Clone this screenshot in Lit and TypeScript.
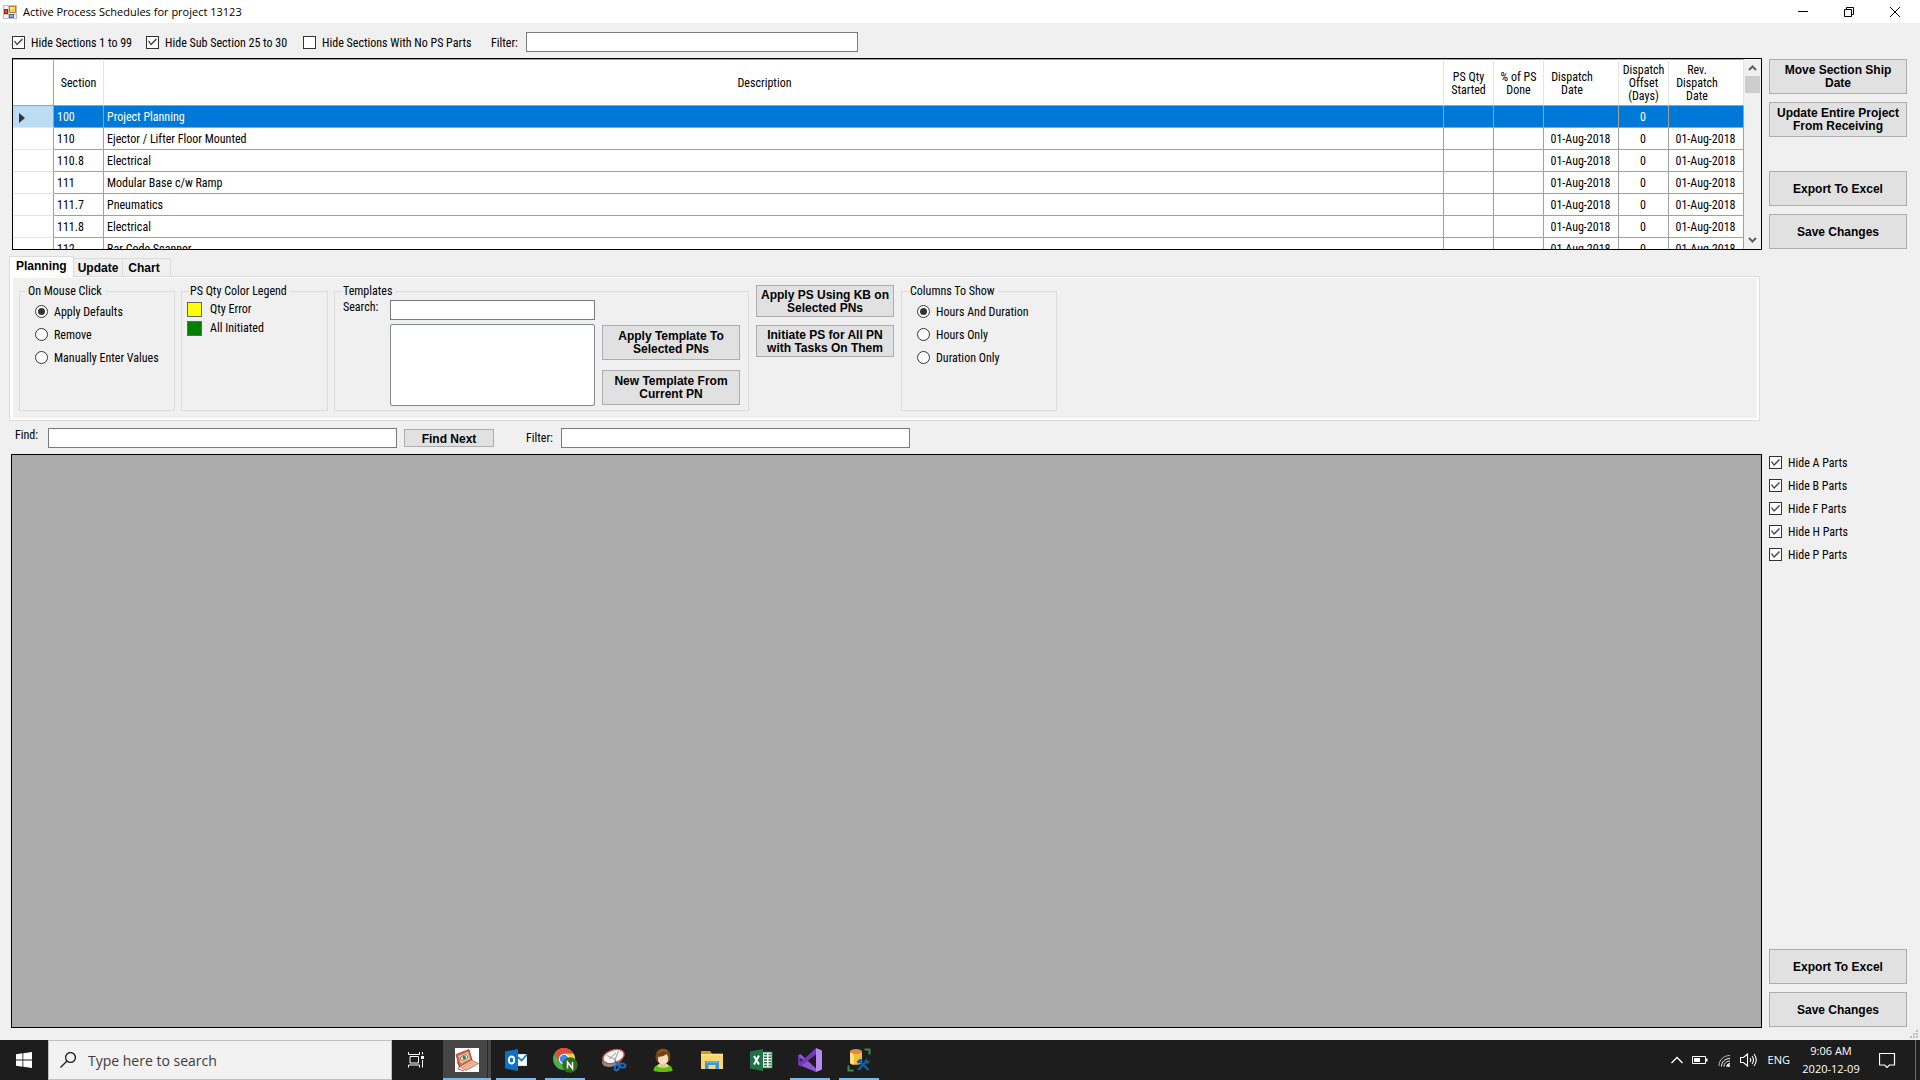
import { LitElement, html, css, svg } from "lit";
import { customElement, state } from "lit/decorators.js";
import { classMap } from "lit/directives/class-map.js";

interface SectionRow {
  section: string;
  description: string;
  dispatch: string;
  offset: number;
  revised: string;
}

const DATE = "01-Aug-2018";

const ROWS: SectionRow[] = [
  { section: "100", description: "Project Planning", dispatch: "", offset: 0, revised: "" },
  { section: "110", description: "Ejector / Lifter Floor Mounted", dispatch: DATE, offset: 0, revised: DATE },
  { section: "110.8", description: "Electrical", dispatch: DATE, offset: 0, revised: DATE },
  { section: "111", description: "Modular Base c/w Ramp", dispatch: DATE, offset: 0, revised: DATE },
  { section: "111.7", description: "Pneumatics", dispatch: DATE, offset: 0, revised: DATE },
  { section: "111.8", description: "Electrical", dispatch: DATE, offset: 0, revised: DATE },
  { section: "112", description: "Bar Code Scanner", dispatch: DATE, offset: 0, revised: DATE },
];

const icon = (size: number, body: unknown) =>
  html`<svg width=${size} height=${size} viewBox="0 0 ${size} ${size}" aria-hidden="true">${body}</svg>`;

const formIcon = icon(14, svg`
  <rect x=".5" y=".5" width="13" height="13" fill="#f4f4f4" stroke="#bdbdbd"/>
  <path d="M5.500 .5v13M.5 9.500h13" stroke="#c4c4c4" fill="none"/>
  <rect x="6.500" y="1.500" width="6" height="6" fill="#fccb4b" stroke="#c08a12"/>
  <path d="M7 2h4v2H7z" fill="#ffe9a0"/>
  <rect x="1.500" y="4.500" width="3" height="4" fill="#e0503a" stroke="#a61d12"/>
  <rect x="6.500" y="9.500" width="4" height="3" fill="#7fb0f5" stroke="#3a6fd0"/>`);

const startIcon = icon(16, svg`<path fill="#fff" d="M0 2.200 6.500 1.300v6.200H0zM7.300 1.200 16 0v7.500H7.300zM0 8.400h6.500v6.300L0 13.800zM7.300 8.400H16V16l-8.700-1.200z"/>`);

const searchIcon = icon(16, svg`<g fill="none" stroke="#1c1c1c" stroke-width="1.300"><circle cx="10.500" cy="5.500" r="4.900"/><path d="M7 9 .5 15.500"/></g>`);

const taskViewIcon = icon(16, svg`<g fill="none" stroke="#fff"><path d="M.5 0v2.500h11V0M.5 15.500v-2.500h11v2.500M2 4.500h8.500v6.500H2zM14.500 0v2.500M14.500 8v7.500"/></g><path fill="#fff" d="M13 4h3v3h-3z"/>`);

const laptopIcon = icon(24, svg`
  <path fill="#fff" d="M0 0h24v24H0z"/>
  <path d="M1 6.500 14 1.500l3 10.500L4.500 19z" fill="#e0664f" stroke="#7b3026" stroke-width=".7"/>
  <path d="M3.500 8 13 4l2 7-9 4.500z" fill="#d9d3ab"/>
  <ellipse cx="9" cy="9.500" rx="4" ry="2.300" transform="rotate(-24 9 9.500)" fill="#f8f4df" stroke="#a03a2f" stroke-width=".7"/>
  <circle cx="9.200" cy="9.400" r="1.700" fill="#277a68"/>
  <path d="M4.500 18.500 16.500 12l7 3.500L11 22.500z" fill="#f4b79a" stroke="#a15a42" stroke-width=".7"/>
  <path d="M8 18.300 16.500 14l3.500 1.700-8.500 4.600z" fill="#e79a7a"/>
  <path d="m9.500 19 8.500-4.300M11 19.700l8.400-4.400M10.300 17.200l3.500 1.700M13 15.900l3.500 1.600" stroke="#f9d0bb" stroke-width=".5"/>
  <path d="M2 13.500 4.500 18.500 3 21l6 2" stroke="#7b3026" stroke-width=".7" fill="none"/>`);

const outlookIcon = icon(24, svg`
  <path fill="#fff" d="M13 6h10v12H13z"/>
  <path d="M13 6.500h9.500v11H13" fill="none" stroke="#dceaf7"/>
  <path d="m14 9 3.500 3.500L23 6.500" fill="none" stroke="#0b72c6" stroke-width="1.600"/>
  <path fill="#0b72c6" d="M1 3.500 14 1v22L1 20.500z"/>
  <ellipse cx="7.500" cy="12" rx="2.700" ry="3.500" fill="none" stroke="#fff" stroke-width="1.900"/>`);

const chromeIcon = icon(26, svg`
  <circle cx="12" cy="12" r="11" fill="#4caf50"/>
  <path fill="#e24a3b" d="M12 12 2.500 6.500A11 11 0 0 1 21.500 6.500H12z"/>
  <path fill="#fdd23e" d="M12 6.700h9.600A11 11 0 0 1 12 23l4.700-8.300z"/>
  <path fill="#e24a3b" d="M2.500 6.500A11 11 0 0 1 12 1v6L7.200 14.500z"/>
  <circle cx="12" cy="12" r="5.200" fill="#fff"/><circle cx="12" cy="12" r="4.200" fill="#4285f4"/>
  <circle cx="18" cy="18" r="7.700" fill="#2f6b20"/>
  <path d="M15.500 21.500v-6.500l5 6.500v-6.500" fill="none" stroke="#fff" stroke-width="1.500"/>`);

const snipIcon = icon(26, svg`
  <ellipse cx="11.500" cy="12.500" rx="11" ry="6.500" transform="rotate(-24 11.500 12.500)" fill="#8b8b8b"/>
  <ellipse cx="12.500" cy="9.500" rx="11" ry="6.500" transform="rotate(-18 12.500 9.500)" fill="#f6f6f6" stroke="#d24a3a" stroke-width="1.300"/>
  <path d="M6 8.500 15 13M17.500 4 13.500 14M8 12l7-6" stroke="#9a9a9a" fill="none"/>
  <g fill="none" stroke="#1d6fc2" stroke-width="1.900"><ellipse cx="16" cy="20.500" rx="2.100" ry="3" transform="rotate(25 16 20.500)"/><ellipse cx="21.500" cy="18.500" rx="3" ry="1.900" transform="rotate(15 21.500 18.500)"/><path d="m17 18-3-4M19 17.500l-4.500-2"/></g>`);

const personIcon = icon(24, svg`
  <path d="M2.500 23c0-5 4-7 9.500-7s9.500 2 9.500 7c-5 1.500-14 1.500-19 0z" fill="#63bb16"/>
  <path d="M6 17.500c2 3 10 3 12 0l-3-2H9z" fill="#c9f08c"/>
  <path d="M9 13h6v4.500c-1 2-5 2-6 0z" fill="#f0bf91"/>
  <ellipse cx="12" cy="9.500" rx="6" ry="7" fill="#fbdcb9"/>
  <path d="M5 12C3.500 4 7 .5 12 .5S20.500 4 19 12c-.5 1-1.500 2-2 2 .5-4 0-6-1.500-8C13 8.500 9 9 7.500 8.500 7 10 7 12 7.200 14 6 13.500 5.300 13 5 12z" fill="#754319"/>
  <path d="M7 5c2-3 6-3.500 9-1.500" stroke="#a56c35" fill="none"/>`);

const folderIcon = icon(24, svg`
  <path fill="#d79a16" d="M1 3h9l2 2.500h11V8H1z"/>
  <path fill="#fbd66b" d="M1 6h22v15H1z"/>
  <path fill="#fff" opacity=".3" d="M1 6h22v1.500H1z"/>
  <path fill="#3c97dd" d="M5 13h14v8h-3.500v-4h-7v4H5z"/><path fill="#5bb1ee" d="M6 13h12v2H6z"/>`);

const excelIcon = icon(24, svg`
  <path fill="#fff" stroke="#1f7244" d="M12 4h11v16H12z"/>
  <path d="M15 6.500h3M19.500 6.500h2.500M15 9.200h3M19.500 9.200h2.500M15 12h3M19.500 12h2.500M15 14.700h3M19.500 14.700h2.500M15 17.400h3M19.500 17.400h2.500" stroke="#1f7244" stroke-width="1.500"/>
  <path fill="#1f7244" d="M1 3.500 14 1v22L1 20.500z"/>
  <path d="m5 8 5 8.500M10 7.500 5 16.500" stroke="#fff" stroke-width="2"/>`);

const studioIcon = icon(24, svg`
  <path fill="#8c55d3" d="M0 7.500 2.500 6 18 20.500V24L0 16.500zM2.300 9.800v4.700L5 12z"/>
  <path fill="#7038ba" d="M2.500 18.500 0 16.500 18 0v6.500z"/>
  <path fill="#6a34b5" d="M0 7.500v9l2.300-2V9.800z"/>
  <path fill="#b88af0" d="m18 0 6 2.500v19L18 24z"/>`);

const dataToolsIcon = icon(24, svg`
  <path fill="#f5bd33" d="M3 3.500v11c0 3 12 3 12 0v-11z"/>
  <path fill="#ffe08a" d="M3 4v11c1 1 2.500 1.500 4 1.700V5z"/>
  <ellipse cx="9" cy="3.500" rx="6" ry="2.500" fill="#d98a3f"/>
  <path d="M17.500 1.500h5v5M6.500 22.500h-5v-5" fill="none" stroke="#3e8b47" stroke-width="2"/>
  <path d="m11 22 8.500-9M12 12.500l9.500 9.500" stroke="#0f62a6" stroke-width="2.200"/>
  <path d="m9.500 13.500 4-3 2 2-4 3.500zM17.500 12.500l3-2.500-.5 3 3.500-.5-3 3.500z" fill="#0f62a6"/>`);

const APPS = [
  { name: "Remote laptop", art: laptopIcon, open: true, active: true },
  { name: "Outlook", art: outlookIcon, open: true, active: false },
  { name: "Chrome", art: chromeIcon, open: true, active: false },
  { name: "Snipping Tool", art: snipIcon, open: false, active: false },
  { name: "Contacts", art: personIcon, open: false, active: false },
  { name: "File Explorer", art: folderIcon, open: false, active: false },
  { name: "Excel", art: excelIcon, open: false, active: false },
  { name: "Visual Studio", art: studioIcon, open: true, active: false },
  { name: "SQL Server Data Tools", art: dataToolsIcon, open: true, active: false },
];

@customElement("app-root")
export class AppRoot extends LitElement {
  @state() private selected = 0;
  @state() private tab = "Planning";

  static styles = css`
    :host {
      display: flex;
      flex-direction: column;
      min-height: 100vh;
      background: #f0f0f0;
      color: #000;
      font: 12px/13px "Roboto Condensed", "Liberation Sans", sans-serif;
    }
    * { box-sizing: border-box; }
    svg { display: block; flex: none; }
    button { margin: 0; padding: 0; border: 0; background: none; color: inherit; font: inherit; }

    .titlebar { display: flex; align-items: center; height: 23px; padding: 0 2px 0 3px; background: #fff; }
    .title { flex: 1; margin: 0 0 0 6px; font: 11px/16px "Open Sans", "Noto Sans", sans-serif; }
    .caption { display: flex; justify-content: center; align-items: center; width: 46px; height: 20px; }

    .toolbar { display: grid; grid-template-columns: 134px 157px 188px 35px 332px; align-items: center; margin: 9px 12px 6px; }
    .caption-text { padding-top: 2px; }
    .choice { display: flex; align-items: center; gap: 6px; white-space: nowrap; }
    .choice input { appearance: none; flex: none; width: 13px; height: 13px; margin: 0; border: 1px solid #333; background: #fff; }
    .choice input[type="radio"] { display: flex; justify-content: center; align-items: center; border-radius: 50%; }
    .choice input:checked::before { content: ""; display: block; width: 11px; height: 11px; background: #444; clip-path: polygon(1px 5px, 2px 4px, 4px 7px, 9px 2px, 10px 3px, 4px 9px); }
    .choice input[type="radio"]:checked::before { width: 7px; height: 7px; border-radius: 50%; background: #333; clip-path: none; }
    .field { height: 20px; width: 100%; margin: 0; padding: 1px 3px; border: 1px solid #7a7a7a; border-radius: 0; background: #fff; font: inherit; }

    .push { padding: 0 6px; border: 1px solid #adadad; background: #e1e1e1; font: bold 12px/13px "Liberation Sans", Arial, sans-serif; height: 35px; }
    .push.single { padding-top: 2px; }
    .push.short { height: 32px; padding: 2px 0 0; }
    .push.thin { height: 18px; line-height: 14px; padding: 2px 0 0; }

    .sections { display: grid; grid-template-columns: minmax(0, 1fr) 138px; gap: 7px; height: 192px; margin: 0 13px 0 12px; }
    .stack { display: flex; flex-direction: column; justify-content: space-between; padding: 1px 0; }
    .pair { display: flex; flex-direction: column; gap: 8px; }
    .grid { display: flex; overflow: hidden; border: 1px solid #000; background: #fff; }
    .viewport { flex: 1; min-width: 0; overflow: hidden; }
    table { width: 100%; table-layout: fixed; border-collapse: separate; border-spacing: 0; }
    th, td { border: solid #a0a0a0; border-width: 0 1px 1px 0; white-space: nowrap; overflow: hidden; }
    thead th { height: 47px; padding: 2px 0 0; border-top: 1px solid #a0a0a0; border-right-color: #e5e5e5; font-weight: normal; text-align: center; }
    thead th:first-child { border-right-color: #a0a0a0; }
    thead th.sortable { padding-right: 18px; }
    tbody td { height: 22px; padding: 2px 3px 0; }
    td.mid { padding: 2px 1px 0 0; text-align: center; }
    td.marker { padding: 2px 6px 0; border-bottom-color: #e5e5e5; }
    .current td { background: #0078d7; color: #fff; }
    .current td.marker { background: #bcdcf4; }
    .c-marker { width: 41px; }
    .c-narrow { width: 50px; }
    .c-date { width: 75px; }
    .scroll { display: flex; flex-direction: column; align-items: center; width: 17px; padding: 5px 0; background: #f0f0f0; }
    .thumb { width: 15px; height: 17px; margin: 3px 0 auto; background: #cdcdcd; }

    .tabs { margin: 6px 160px 7px 9px; }
    .tablist { display: flex; align-items: flex-end; }
    .tab { height: 18px; padding: 1px 4px 0; border: 1px solid #dcdcdc; border-width: 1px 1px 0 0; background: #f0f0f0; font: bold 12px/16px "Liberation Sans", Arial, sans-serif; }
    .tab:last-child { padding: 1px 10px 0 5px; }
    .tab.on { position: relative; height: 21px; margin-bottom: -1px; padding: 0 6px 2px; border-left-width: 1px; background: #fff; }
    .panel { display: flex; gap: 6px; padding: 7px 9px 9px; border: 1px solid #dcdcdc; background: #f0f0f0; box-shadow: inset 3px 1px #fff, inset -2px -2px #fff; }
    fieldset { min-width: 0; margin: 0; padding: 0; border: 1px solid #dcdcdc; }
    legend { margin-left: 7px; padding: 1px 3px 0 1px; }
    .w-choices { width: 156px; }
    .w-legend { width: 147px; }
    .w-templates { width: 415px; }
    .options { display: flex; flex-direction: column; gap: 8px; padding: 6px 0 0 15px; }
    .keys { display: flex; flex-direction: column; gap: 4px; margin: 0; padding: 4px 5px; list-style: none; }
    .keys li { display: flex; align-items: center; gap: 8px; }
    .swatch { width: 15px; height: 15px; border: 1px solid #646464; }
    .yellow { background: #ff0; }
    .green { background: #008000; }
    .templates { display: grid; grid-template-columns: 47px 205px 138px; grid-template-rows: 20px 82px; row-gap: 4px; padding: 2px 8px 4px; }
    .high { align-self: start; padding-top: 1px; }
    .list { grid-column: 2; height: 100%; padding: 0; border: 1px solid #828790; background: #fff; overflow: hidden; appearance: none; }
    .template-actions { display: flex; flex-direction: column; gap: 10px; width: 138px; margin-left: 7px; padding-top: 1px; }
    .actions { display: flex; flex-direction: column; gap: 8px; width: 138px; margin: 1px; }

    .finder { display: grid; grid-template-columns: 33px 349px 7px 90px 32px 35px 349px; align-items: center; margin: 0 15px 6px; }
    .col4 { grid-column: 4; }
    .col6 { grid-column: 6; }

    .parts { flex: 1; display: grid; grid-template-columns: minmax(0, 1fr) 138px; gap: 7px; margin: 0 13px 0 11px; }
    .canvas { border: 1px solid #000; background: #ababab; }
    .hides { display: flex; flex-direction: column; gap: 8px; }
    .foot { display: flex; justify-content: flex-end; height: 12px; padding: 2px 2px 0; }

    .taskbar { display: flex; height: 40px; background: #1d1d1d; color: #fff; font: 11px/18px "Open Sans", "Noto Sans", sans-serif; }
    .task { display: flex; justify-content: center; align-items: center; width: 48px; height: 40px; }
    .search { display: flex; align-items: center; gap: 12px; width: 344px; padding: 0 11px; border: 1px solid #bfbfbf; background: #f2f2f2; }
    .search input { flex: 1; min-width: 0; padding: 2px 0 0; border: 0; outline: 0; background: none; font: 14px/20px "Open Sans", "Noto Sans", sans-serif; }
    .search input::placeholder { color: #3c3c3c; opacity: 1; }
    .apps { display: flex; gap: 1px; flex: 1; margin-left: 3px; }
    .open { background: linear-gradient(#76b9ed, #76b9ed) center bottom / 40px 2px no-repeat; }
    .active { background: linear-gradient(#76b9ed, #76b9ed) center bottom / 48px 2px no-repeat, linear-gradient(90deg, #454545 44px, #2a2a2a 44px 45px, #454545 45px); }
    .tray { display: flex; align-items: center; }
    .tray svg { margin-right: 8px; }
    .lang { margin: 0 11px 0 2px; }
    .clock { display: flex; flex-direction: column; align-items: center; width: 60px; margin-right: 18px; }
    .desktop { width: 5px; height: 40px; margin-left: 11px; border-left: 1px solid #6b6b6b; }
  `;

  private check(label: string, checked: boolean) {
    return html`<label class="choice"><input type="checkbox" .checked=${checked}><span class="caption-text">${label}</span></label>`;
  }

  private radio(group: string, label: string, checked = false) {
    return html`<label class="choice"><input type="radio" name=${group} .checked=${checked}><span class="caption-text">${label}</span></label>`;
  }

  private renderSections() {
    return html`
      <div class="sections">
        <div class="grid">
          <div class="viewport">
            <table>
              <colgroup>
                <col class="c-marker"><col class="c-narrow"><col><col class="c-narrow"><col class="c-narrow">
                <col class="c-date"><col class="c-narrow"><col class="c-date">
              </colgroup>
              <thead>
                <tr>
                  <th></th><th>Section</th><th class="sortable">Description</th>
                  <th>PS Qty<br>Started</th><th>% of PS<br>Done</th>
                  <th class="sortable">Dispatch<br>Date</th><th>Dispatch<br>Offset<br>(Days)</th>
                  <th class="sortable">Rev.<br>Dispatch<br>Date</th>
                </tr>
              </thead>
              <tbody>
                ${ROWS.map((row, i) => html`
                  <tr class=${classMap({ current: i === this.selected })} @click=${() => { this.selected = i; }}>
                    <td class="marker">${i === this.selected ? html`<svg width="6" height="10" viewBox="0 0 6 10"><path d="M0 0l6 5-6 5z" fill="#333"/></svg>` : ""}</td>
                    <td>${row.section}</td><td>${row.description}</td><td></td><td></td>
                    <td class="mid">${row.dispatch}</td><td class="mid">${row.offset}</td><td class="mid">${row.revised}</td>
                  </tr>`)}
              </tbody>
            </table>
          </div>
          <div class="scroll">
            <svg width="9" height="9" viewBox="0 0 9 9"><path d="M1 6l3.500-3.500L8 6" fill="none" stroke="#606060" stroke-width="2"/></svg>
            <div class="thumb"></div>
            <svg width="9" height="9" viewBox="0 0 9 9"><path d="M1 3l3.500 3.500L8 3" fill="none" stroke="#606060" stroke-width="2"/></svg>
          </div>
        </div>
        <div class="stack">
          <div class="pair">
            <button class="push">Move Section Ship Date</button>
            <button class="push">Update Entire Project From Receiving</button>
          </div>
          <div class="pair">
            <button class="push single">Export To Excel</button>
            <button class="push single">Save Changes</button>
          </div>
        </div>
      </div>`;
  }

  private renderTabs() {
    return html`
      <div class="tabs">
        <div class="tablist" role="tablist">
          ${["Planning", "Update", "Chart"].map((name) => html`
            <button role="tab" aria-selected=${name === this.tab ? "true" : "false"}
              class=${classMap({ tab: true, on: name === this.tab })} @click=${() => { this.tab = name; }}>${name}</button>`)}
        </div>
        <div class="panel" role="tabpanel">
          <fieldset class="w-choices">
            <legend>On Mouse Click</legend>
            <div class="options">
              ${this.radio("click", "Apply Defaults", true)}
              ${this.radio("click", "Remove")}
              ${this.radio("click", "Manually Enter Values")}
            </div>
          </fieldset>
          <fieldset class="w-legend">
            <legend>PS Qty Color Legend</legend>
            <ul class="keys">
              <li><span class="swatch yellow"></span>Qty Error</li>
              <li><span class="swatch green"></span>All Initiated</li>
            </ul>
          </fieldset>
          <fieldset class="w-templates">
            <legend>Templates</legend>
            <div class="templates">
              <label class="high" for="template-search">Search:</label>
              <input class="field" id="template-search" type="text">
              <select class="list" size="5" aria-label="Templates"></select>
              <div class="template-actions">
                <button class="push">Apply Template To Selected PNs</button>
                <button class="push">New Template From Current PN</button>
              </div>
            </div>
          </fieldset>
          <div class="actions">
            <button class="push short">Apply PS Using KB on<br>Selected PNs</button>
            <button class="push short">Initiate PS for All PN<br>with Tasks On Them</button>
          </div>
          <fieldset class="w-choices">
            <legend>Columns To Show</legend>
            <div class="options">
              ${this.radio("columns", "Hours And Duration", true)}
              ${this.radio("columns", "Hours Only")}
              ${this.radio("columns", "Duration Only")}
            </div>
          </fieldset>
        </div>
      </div>`;
  }

  private renderTaskbar() {
    return html`
      <footer class="taskbar">
        <button class="task" aria-label="Start">${startIcon}</button>
        <label class="search">${searchIcon}<input type="text" placeholder="Type here to search" aria-label="Search"></label>
        <button class="task" aria-label="Task View">${taskViewIcon}</button>
        <div class="apps">
          ${APPS.map((app) => html`<button aria-label=${app.name}
            class=${classMap({ task: true, open: app.open && !app.active, active: app.active })}>${app.art}</button>`)}
        </div>
        <div class="tray">
          <svg width="14" height="14" viewBox="0 0 14 14"><path d="M1.500 10 7 4.500 12.500 10" fill="none" stroke="#fff" stroke-width="1.300"/></svg>
          <svg width="16" height="16" viewBox="0 0 16 16"><path d="M.5 4.500h13v7H.5z" fill="none" stroke="#fff"/><path d="M2 6h6v4H2zM14 6.500h1.500v3H14z" fill="#fff"/></svg>
          <svg width="16" height="16" viewBox="0 0 16 16"><g fill="none" stroke="#fff"><path d="M3 14C3 8 7.500 3.500 14 3.500" stroke="#bbb"/><path d="M5.500 14.500c0-4.500 3.500-8 8.500-8M8 14.500c0-3 2.500-5.500 6-5.500M10.500 14.500c0-1.500 1.500-3 3.500-3"/></g><circle cx="12.500" cy="13.500" r="1.500" fill="#fff"/></svg>
          <svg width="18" height="16" viewBox="0 0 18 16"><path d="M.5 5.500h3l4-3.500v12l-4-3.500h-3zM10 6q1.500 2 0 4M12 4q3 4 0 8M14 2q4.500 6 0 12" fill="none" stroke="#fff" stroke-width="1.100"/></svg>
          <span class="lang">ENG</span>
          <div class="clock"><span>9:06 AM</span><span>2020-12-09</span></div>
          <svg width="17" height="17" viewBox="0 0 17 17"><path d="M.5 1.500h15v11.500h-5L8 15.500 5.500 13h-5z" fill="none" stroke="#fff" stroke-width="1.200"/></svg>
          <div class="desktop"></div>
        </div>
      </footer>`;
  }

  render() {
    return html`
      <header class="titlebar">
        ${formIcon}
        <h1 class="title">Active Process Schedules for project 13123</h1>
        <button class="caption" aria-label="Minimize"><svg width="10" height="10" viewBox="0 0 10 10"><path d="M0 4.500h10" stroke="#000"/></svg></button>
        <button class="caption" aria-label="Restore"><svg width="10" height="10" viewBox="0 0 10 10"><path d="M.5 2.500h7v7h-7zM2.500 2.500v-2h7v7h-2" fill="none" stroke="#000"/></svg></button>
        <button class="caption" aria-label="Close"><svg width="10" height="10" viewBox="0 0 10 10"><path d="M0 0l10 10M10 0 0 10" stroke="#000"/></svg></button>
      </header>
      <div class="toolbar">
        ${this.check("Hide Sections 1 to 99", true)}
        ${this.check("Hide Sub Section 25 to 30", true)}
        ${this.check("Hide Sections With No PS Parts", false)}
        <label class="caption-text" for="section-filter">Filter:</label>
        <input class="field" id="section-filter" type="text">
      </div>
      ${this.renderSections()}
      ${this.renderTabs()}
      <div class="finder">
        <label class="high" for="find">Find:</label>
        <input class="field" id="find" type="text">
        <button class="push thin col4">Find Next</button>
        <label class="col6" for="part-filter">Filter:</label>
        <input class="field" id="part-filter" type="text">
      </div>
      <div class="parts">
        <div class="canvas"></div>
        <div class="stack">
          <div class="hides">
            ${["A", "B", "F", "H", "P"].map((p) => this.check(`Hide ${p} Parts`, true))}
          </div>
          <div class="pair">
            <button class="push single">Export To Excel</button>
            <button class="push single">Save Changes</button>
          </div>
        </div>
      </div>
      <div class="foot"><svg width="8" height="8" viewBox="0 0 8 8"><path fill="#bdbdbd" d="M6 0h2v2H6zM3 3h2v2H3zM6 3h2v2H6zM0 6h2v2H0zM3 6h2v2H3zM6 6h2v2H6z"/></svg></div>
      ${this.renderTaskbar()}`;
  }
}
